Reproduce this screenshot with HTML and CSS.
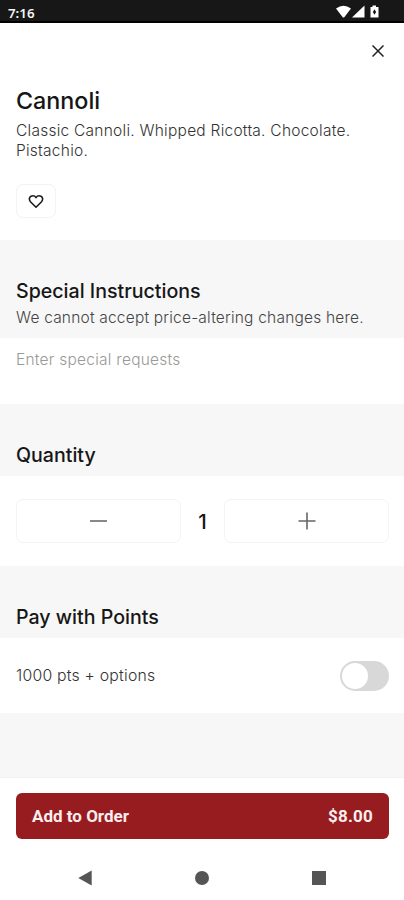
FILE: index.html
```
<!DOCTYPE html>
<html lang="en">
<head>
	<meta charset="UTF-8">
	<title>Cannoli</title>
	<link rel="stylesheet" href="styles.css">
</head>
<body>
	<div class="wrapper">
		<div class="status">
			<span class="time">7:16</span>
			<svg width="46" height="16" viewBox="0 0 46 16" fill="#fff">
				<path d="M0 4.5 Q7.5 -1 15 4.5 L8.5 13 Q7.5 14 6.5 13 Z"/>
				<path d="M16 13.5 L28.5 1.5 V13.5 Z"/>
				<path d="M34.5 3 H36.5 V1.5 H40 V3 H42.5 V13.5 H34.5 Z"/>
				<path d="M38.5 5.2 L40.2 8 L38.5 10.8 L36.8 8 Z" fill="#171717"/>
			</svg>
		</div>
		<div class="item">
			<div class="close">
				<svg width="12" height="12" viewBox="0 0 12 12" fill="none" stroke="#222" stroke-width="1.5">
					<path d="M0.5 0.5 L11.5 11.5 M11.5 0.5 L0.5 11.5"/>
				</svg>
			</div>
			<h1>Cannoli</h1>
			<p class="desc">Classic Cannoli. Whipped Ricotta. Chocolate.<br>Pistachio.</p>
			<div class="like">
				<svg width="16" height="15" viewBox="0 0 16 15" fill="none" stroke="#1c1c1c" stroke-width="1.6" stroke-linejoin="round">
					<path d="M8 13.2 L2.7 8 C0.6 5.9 1.2 3.2 3 2.3 C4.9 1.3 6.9 1.9 8 3.6 C9.1 1.9 11.1 1.3 13 2.3 C14.8 3.2 15.4 5.9 13.3 8 Z"/>
				</svg>
			</div>
		</div>
		<div class="heading headingNote">
			<h2>Special Instructions</h2>
			<p class="note">We cannot accept price-altering changes here.</p>
		</div>
		<div class="request">Enter special requests</div>
		<div class="heading">
			<h2>Quantity</h2>
		</div>
		<div class="quantity">
			<div class="btn">
				<svg width="18" height="18" viewBox="0 0 18 18" stroke="#888" stroke-width="2">
					<path d="M0 9 H17"/>
				</svg>
			</div>
			<span class="num">1</span>
			<div class="btn">
				<svg width="18" height="18" viewBox="0 0 18 18" stroke="#666" stroke-width="1.6">
					<path d="M0.5 9 H17.5 M9 0.5 V17.5"/>
				</svg>
			</div>
		</div>
		<div class="heading">
			<h2>Pay with Points</h2>
		</div>
		<div class="points">
			<span class="pts">1000 pts + options</span>
			<div class="toggle"><div class="knob"></div></div>
		</div>
		<div class="footer">
			<div class="order">
				<span class="add">Add to Order</span>
				<span class="price">$8.00</span>
			</div>
			<div class="nav">
				<svg width="14" height="16" viewBox="0 0 14 16" fill="#555">
					<path d="M0.3 8 L13.7 0.5 V15.5 Z"/>
				</svg>
				<svg width="14" height="14" viewBox="0 0 14 14" fill="#555">
					<circle cx="7" cy="7" r="7"/>
				</svg>
				<svg width="14" height="14" viewBox="0 0 14 14" fill="#555">
					<rect width="14" height="14"/>
				</svg>
			</div>
		</div>
	</div>
</body>
</html>
```
FILE: styles.css
```
* {
	padding: 0px;
	margin: 0px;
	box-sizing: border-box;
}
body {
	background: #f7f7f7;
	font-family: Inter, "Liberation Sans", sans-serif;
	color: #161616;
}
svg {
	display: block;
}
.wrapper {
	width: 404px;
	height: 900px;
	display: flex;
	flex-direction: column;
	overflow: hidden;
}
.wrapper p, .wrapper h1, .wrapper h2, .wrapper span, .request {
	white-space: nowrap;
}
.status {
	height: 23px;
	padding: 0px 22px 0px 8px;
	background: #171717;
	border-bottom: 2px solid #000;
	display: flex;
	align-items: center;
	justify-content: space-between;
}
.status svg {
	margin-top: 3px;
}
.time {
	font-family: "Noto Sans", sans-serif;
	font-size: 13.3px;
	font-weight: 600;
	line-height: 20px;
	padding-top: 4px;
	color: #f4f4f4;
}
.item {
	height: 217px;
	padding: 22px 16px 0px;
	background: #fff;
}
.close {
	display: flex;
	justify-content: flex-end;
	padding-right: 4px;
}
.item h1 {
	margin-top: 29px;
	font-size: 23.3px;
	font-weight: 500;
	line-height: 30px;
}
.desc {
	margin-top: 5px;
	font-size: 15.5px;
	font-weight: 300;
	line-height: 20px;
	letter-spacing: 0.25px;
	color: #333;
}
.like {
	width: 40px;
	height: 34px;
	margin-top: 23px;
	border: 1px solid #f3f3f3;
	border-radius: 7px;
	display: flex;
	align-items: center;
	justify-content: center;
}
.heading {
	height: 72px;
	padding: 38px 16px 0px;
}
.headingNote {
	height: 98px;
}
h2 {
	font-size: 19.6px;
	font-weight: 500;
	line-height: 26px;
}
.note {
	margin-top: 4px;
	font-size: 15.5px;
	font-weight: 300;
	line-height: 20px;
	letter-spacing: 0.2px;
	color: #444;
}
.request {
	height: 66px;
	padding: 12px 16px 0px;
	background: #fff;
	font-size: 15.5px;
	font-weight: 300;
	line-height: 20px;
	letter-spacing: 0.25px;
	color: #999;
}
.quantity {
	height: 90px;
	padding: 0px 15px 0px 16px;
	background: #fff;
	display: flex;
	align-items: center;
}
.btn {
	flex: 1;
	height: 44px;
	border: 1px solid #f4f4f4;
	border-radius: 7px;
	display: flex;
	align-items: center;
	justify-content: center;
}
.num {
	width: 43px;
	font-size: 20.5px;
	font-weight: 500;
	text-align: center;
}
.points {
	height: 75px;
	padding: 0px 15px 0px 16px;
	background: #fff;
	display: flex;
	align-items: center;
	justify-content: space-between;
}
.pts {
	font-size: 15.8px;
	font-weight: 300;
	letter-spacing: 0.22px;
	color: #333;
}
.toggle {
	width: 49px;
	height: 30px;
	padding: 2px;
	border-radius: 15px;
	background: #d8d8d8;
}
.knob {
	width: 26px;
	height: 26px;
	border-radius: 50%;
	background: #fff;
}
.footer {
	height: 123px;
	margin-top: auto;
	padding: 15px 15px 0px 16px;
	border-top: 1px solid #f1f1f1;
	background: #fff;
}
.order {
	height: 46px;
	padding: 0px 16px 1px;
	border-radius: 6px;
	background: #971c20;
	display: flex;
	align-items: center;
	justify-content: space-between;
	font-family: Roboto, sans-serif;
	font-size: 17px;
	font-weight: 700;
	color: #fbeeee;
}
.price {
	letter-spacing: 0.2px;
}
.nav {
	height: 16px;
	margin-top: 31px;
	padding: 0px 63px 0px 62px;
	display: flex;
	align-items: center;
	justify-content: space-between;
}
```
